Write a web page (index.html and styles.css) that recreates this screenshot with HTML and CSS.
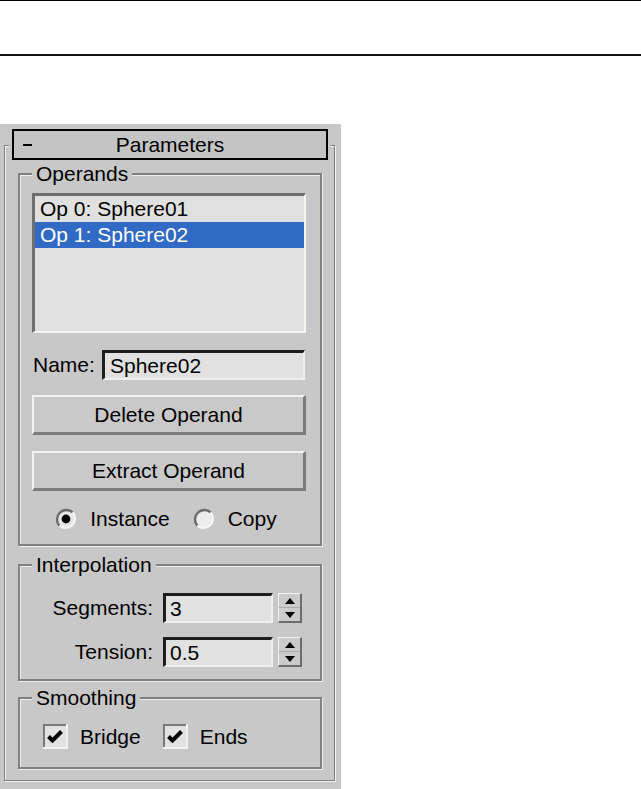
FILE: index.html
```html
<!DOCTYPE html>
<html>
<head>
<meta charset="utf-8">
<title>Parameters</title>
<link rel="stylesheet" href="styles.css">
</head>
<body>
<div class="topbar"></div>
<div class="panel">
  <div class="rollout-title"><span class="minus-cell"><span class="minus"></span></span><span class="title-text">Parameters</span><span></span></div>
  <div class="frame">
    <fieldset class="group">
      <legend>Operands</legend>
      <div class="operands-body">
        <div class="listbox">
          <div class="list-row">Op 0: Sphere01</div>
          <div class="list-row selected">Op 1: Sphere02</div>
        </div>
        <div class="name-row">
          <span class="name-label">Name:</span>
          <div class="textfield name-field">Sphere02</div>
        </div>
        <div class="button btn-delete">Delete Operand</div>
        <div class="button btn-extract">Extract Operand</div>
        <div class="radio-row">
          <svg class="radio" width="22" height="22" viewBox="0 0 22 22">
            <circle cx="11" cy="11" r="9.5" fill="#e6e6e6"/>
            <path d="M4.3 17.7 A9.5 9.5 0 0 1 17.7 4.3" stroke="#6a6a6a" stroke-width="2.4" fill="none"/>
            <path d="M17.7 4.3 A9.5 9.5 0 0 1 4.3 17.7" stroke="#f6f6f6" stroke-width="2" fill="none"/>
            <circle cx="11" cy="11" r="4.4" fill="#000"/>
          </svg>
          <span class="radio-label">Instance</span>
          <svg class="radio radio-second" width="22" height="22" viewBox="0 0 22 22">
            <circle cx="11" cy="11" r="9.5" fill="#ececec"/>
            <path d="M4.3 17.7 A9.5 9.5 0 0 1 17.7 4.3" stroke="#6a6a6a" stroke-width="2.4" fill="none"/>
            <path d="M17.7 4.3 A9.5 9.5 0 0 1 4.3 17.7" stroke="#f6f6f6" stroke-width="2" fill="none"/>
          </svg>
          <span class="radio-label">Copy</span>
        </div>
      </div>
    </fieldset>

    <fieldset class="group group-interp">
      <legend>Interpolation</legend>
      <div class="interp-body">
        <div class="spin-row">
          <span class="spin-label">Segments:</span>
          <div class="textfield spin-field">3</div>
          <div class="spinner">
            <div class="spin-half spin-up"><span class="arrow-up"></span></div>
            <div class="spin-half"><span class="arrow-down"></span></div>
          </div>
        </div>
        <div class="spin-row">
          <span class="spin-label">Tension:</span>
          <div class="textfield spin-field">0.5</div>
          <div class="spinner">
            <div class="spin-half spin-up"><span class="arrow-up"></span></div>
            <div class="spin-half"><span class="arrow-down"></span></div>
          </div>
        </div>
      </div>
    </fieldset>

    <fieldset class="group group-smooth">
      <legend>Smoothing</legend>
      <div class="smooth-body">
        <svg class="checkbox" width="25" height="25" viewBox="0 0 25 25">
          <rect x="0" y="0" width="25" height="25" fill="#f2f2f2"/>
          <rect x="0" y="0" width="23" height="23" fill="#7a7a7a"/>
          <rect x="2" y="2" width="21" height="21" fill="#e2e2e2"/>
          <path d="M5.5 12.5 L9.5 16.5 L18.5 7.5" stroke="#000" stroke-width="4" fill="none"/>
        </svg>
        <span class="check-label">Bridge</span>
        <svg class="checkbox checkbox-second" width="25" height="25" viewBox="0 0 25 25">
          <rect x="0" y="0" width="25" height="25" fill="#f2f2f2"/>
          <rect x="0" y="0" width="23" height="23" fill="#7a7a7a"/>
          <rect x="2" y="2" width="21" height="21" fill="#e2e2e2"/>
          <path d="M5.5 12.5 L9.5 16.5 L18.5 7.5" stroke="#000" stroke-width="4" fill="none"/>
        </svg>
        <span class="check-label">Ends</span>
      </div>
    </fieldset>
  </div>
</div>
</body>
</html>
```

FILE: styles.css
```css
* { box-sizing: border-box; }

body {
  margin: 0;
  background: #fff;
  font-family: "Liberation Sans", Arial, sans-serif;
  font-size: 21px;
  color: #000;
  overflow: hidden;
}

.topbar {
  height: 56px;
  border-top: 1px solid #000;
  border-bottom: 2px solid #111;
}

.panel {
  margin-top: 68px;
  width: 341px;
  height: 665px;
  background: #c8c8c8;
  padding-top: 5px;
}

.rollout-title {
  position: relative;
  z-index: 1;
  margin-left: 12px;
  width: 316px;
  height: 31px;
  border: 2px solid #000;
  background: #c4c4c4;
  box-shadow: 0 0 0 3px #c8c8c8;
  display: grid;
  grid-template-columns: 1fr auto 1fr;
  align-items: center;
  line-height: 27px;
}

.minus-cell {
  display: flex;
  align-items: center;
  padding-left: 9px;
}

.minus {
  display: block;
  width: 9px;
  height: 2px;
  background: #000;
}

.frame {
  margin: -15px 0 0 4px;
  width: 331px;
  padding: 16px 12px 11px 13px;
  border: 1px solid #808080;
  box-shadow: inset 1px 1px 0 #f4f4f4, 1px 1px 0 #f4f4f4;
}

.group {
  margin: 0;
  padding: 0;
  min-width: 0;
  width: 304px;
  border: 2px solid #808080;
  box-shadow: inset 1px 1px 0 #eeeeee, 1px 1px 0 #eeeeee;
}

.group legend {
  margin-left: 12px;
  padding: 0 4px;
  line-height: 24px;
  background: #c8c8c8;
}

.group-interp { margin-top: 7px; }
.group-smooth { margin-top: 5px; }

.operands-body {
  padding: 7px 14px 13px 12px;
}

.listbox {
  height: 140px;
  background: #e1e1e1;
  border-style: solid;
  border-width: 3px 2px 2px 3px;
  border-color: #6f6f6f #f6f6f0 #f6f6f0 #6f6f6f;
}

.list-row {
  height: 26px;
  line-height: 26px;
  padding-left: 5px;
  white-space: nowrap;
}

.list-row.selected {
  background: #316ac5;
  color: #fff;
}

.name-row {
  margin-top: 17px;
  display: flex;
  align-items: center;
  height: 30px;
}

.name-label {
  width: 70px;
  padding-left: 1px;
}

.textfield {
  height: 30px;
  background: #e1e1e1;
  border-style: solid;
  border-width: 3px 2px 2px 3px;
  border-color: #1e1e1e #efefef #efefef #1e1e1e;
  line-height: 25px;
  white-space: nowrap;
}

.name-field {
  width: 203px;
  padding-left: 5px;
}

.button {
  height: 40px;
  display: flex;
  align-items: center;
  justify-content: center;
  background: #c9c9c9;
  border-style: solid;
  border-width: 2px 3px 3px 2px;
  border-color: #f2f2f2 #7c7c7c #7c7c7c #f2f2f2;
}

.btn-delete { margin-top: 15px; }
.btn-extract { margin-top: 16px; }

.radio-row {
  margin-top: 16px;
  height: 24px;
  display: flex;
  align-items: center;
  justify-content: center;
  padding-right: 6px;
}

.radio { flex: none; margin-right: 13px; }
.radio-second { margin-left: 23px; }

.interp-body {
  padding: 16px 4px 12px 12px;
}

.spin-row {
  display: flex;
  align-items: center;
  height: 30px;
}

.spin-row + .spin-row { margin-top: 14px; }

.spin-label {
  width: 121px;
  text-align: right;
}

.spin-field {
  margin-left: 10px;
  width: 110px;
  padding-left: 4px;
}

.spinner {
  margin-left: 5px;
  width: 24px;
  height: 30px;
  display: flex;
  flex-direction: column;
  background: #cbcbcb;
  border-style: solid;
  border-width: 1px 2px 2px 1px;
  border-color: #f2f2f2 #6c6c6c #6c6c6c #f2f2f2;
}

.spin-half {
  flex: 1;
  display: flex;
  align-items: center;
  justify-content: center;
}

.spin-up { border-bottom: 1px solid #a8a8a8; }

.arrow-up {
  width: 0;
  height: 0;
  border-left: 5px solid transparent;
  border-right: 5px solid transparent;
  border-bottom: 6px solid #000;
}

.arrow-down {
  width: 0;
  height: 0;
  border-left: 5px solid transparent;
  border-right: 5px solid transparent;
  border-top: 6px solid #000;
}

.smooth-body {
  padding: 14px 12px 18px 23px;
  display: flex;
  align-items: center;
}

.checkbox { flex: none; margin-right: 12px; }
.checkbox-second { margin-left: 22px; }
```
